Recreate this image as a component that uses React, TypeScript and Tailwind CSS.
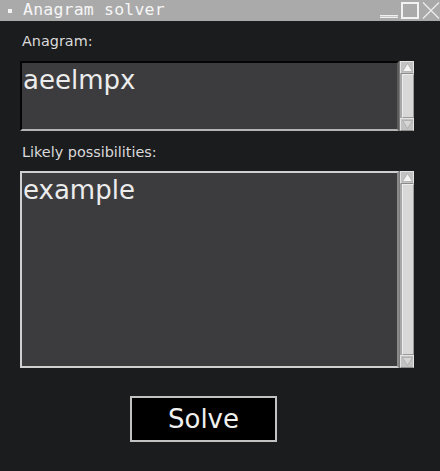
import React from "react";

const sans = { fontFamily: '"DejaVu Sans", Verdana, sans-serif' };

const Scrollbar = () => (
  <div className="flex w-[15px] flex-col border-l border-[#7a7a7a] bg-[#a8a8a8]">
    <div className="flex h-[13px] items-center justify-center border border-[#e4e4e4] border-b-[#8c8c8c] bg-[#c2c2c2]">
      <svg width="11" height="9" viewBox="0 0 11 9">
        <path d="M5.5 0.5 L10.5 8.5 L0.5 8.5 Z" fill="#f4f4f4" stroke="#a0a0a0" strokeWidth="0.6" />
      </svg>
    </div>
    <div className="ml-[2px] flex-1 border border-[#ececec] border-b-[#9a9a9a] border-r-[#9a9a9a] bg-[#d8d8d8]" />
    <div className="flex h-[13px] items-center justify-center border border-[#e4e4e4] border-b-[#8c8c8c] bg-[#c2c2c2]">
      <svg width="11" height="9" viewBox="0 0 11 9">
        <path d="M0.5 0.5 L10.5 0.5 L5.5 8.5 Z" fill="#d6d6d6" stroke="#a0a0a0" strokeWidth="0.6" />
      </svg>
    </div>
  </div>
);

export default function App() {
  return (
    <div className="flex h-[471px] w-[440px] flex-col overflow-hidden bg-[#1b1c1e]">
      {/* title bar */}
      <div className="flex h-[21px] items-center bg-[#aaaaaa]">
        <div className="ml-[8px] h-[4px] w-[4px] bg-[#f4f4f4]" />
        <span
          className="ml-[11px] text-[16.5px] leading-none tracking-[0.2px] text-[#f6f6f6]"
          style={{ fontFamily: '"DejaVu Sans Mono", monospace' }}
        >
          Anagram solver
        </span>
        <div className="ml-auto flex h-full items-start">
          <div className="mt-[15px] h-[3px] w-[18px] border-y border-[#f0f0f0] bg-[#c8c8c8]" />
          <div className="ml-[3px] mt-[2px] h-[17px] w-[18px] border-2 border-[#f2f2f2]" />
          <svg className="ml-[3px] mt-[2px]" width="18" height="17" viewBox="0 0 18 17">
            <path d="M1 0.5 L17 16.5 M17 0.5 L1 16.5" stroke="#ececec" strokeWidth="1.3" />
          </svg>
        </div>
      </div>

      <div className="flex flex-col px-[20px] pr-[26px]" style={sans}>
        <label className="mt-[12px] pl-[2px] text-[14.4px] leading-[17px] text-[#dadada]">Anagram:</label>
        <div className="mt-[11px] flex h-[70px]">
          <div className="flex-1 border-2 border-b-[#b4b4b4] border-l-[#050505] border-r-[#5c5c5c] border-t-[#050505] bg-[#3c3c3e] px-[1px] pt-[2px] text-[26px] leading-[30px] text-[#ececec]">
            aeelmpx
          </div>
          <Scrollbar />
        </div>

        <label className="mt-[13px] pl-[2px] text-[14.4px] leading-[17px] text-[#dadada]">
          Likely possibilities:
        </label>
        <div className="mt-[10px] flex h-[197px]">
          <div className="flex-1 border-2 border-[#d0d0d0] border-r-[#8a8a8a] bg-[#3c3c3e] px-[1px] pt-[2px] text-[26px] leading-[30px] text-[#ececec]">
            example
          </div>
          <Scrollbar />
        </div>

        <div className="mt-[28px] pl-[110px]">
          <button className="h-[46px] w-[147px] border-2 border-[#c2c2c2] bg-black text-[26px] leading-none text-[#f0f0f0]">
            Solve
          </button>
        </div>
      </div>
    </div>
  );
}
